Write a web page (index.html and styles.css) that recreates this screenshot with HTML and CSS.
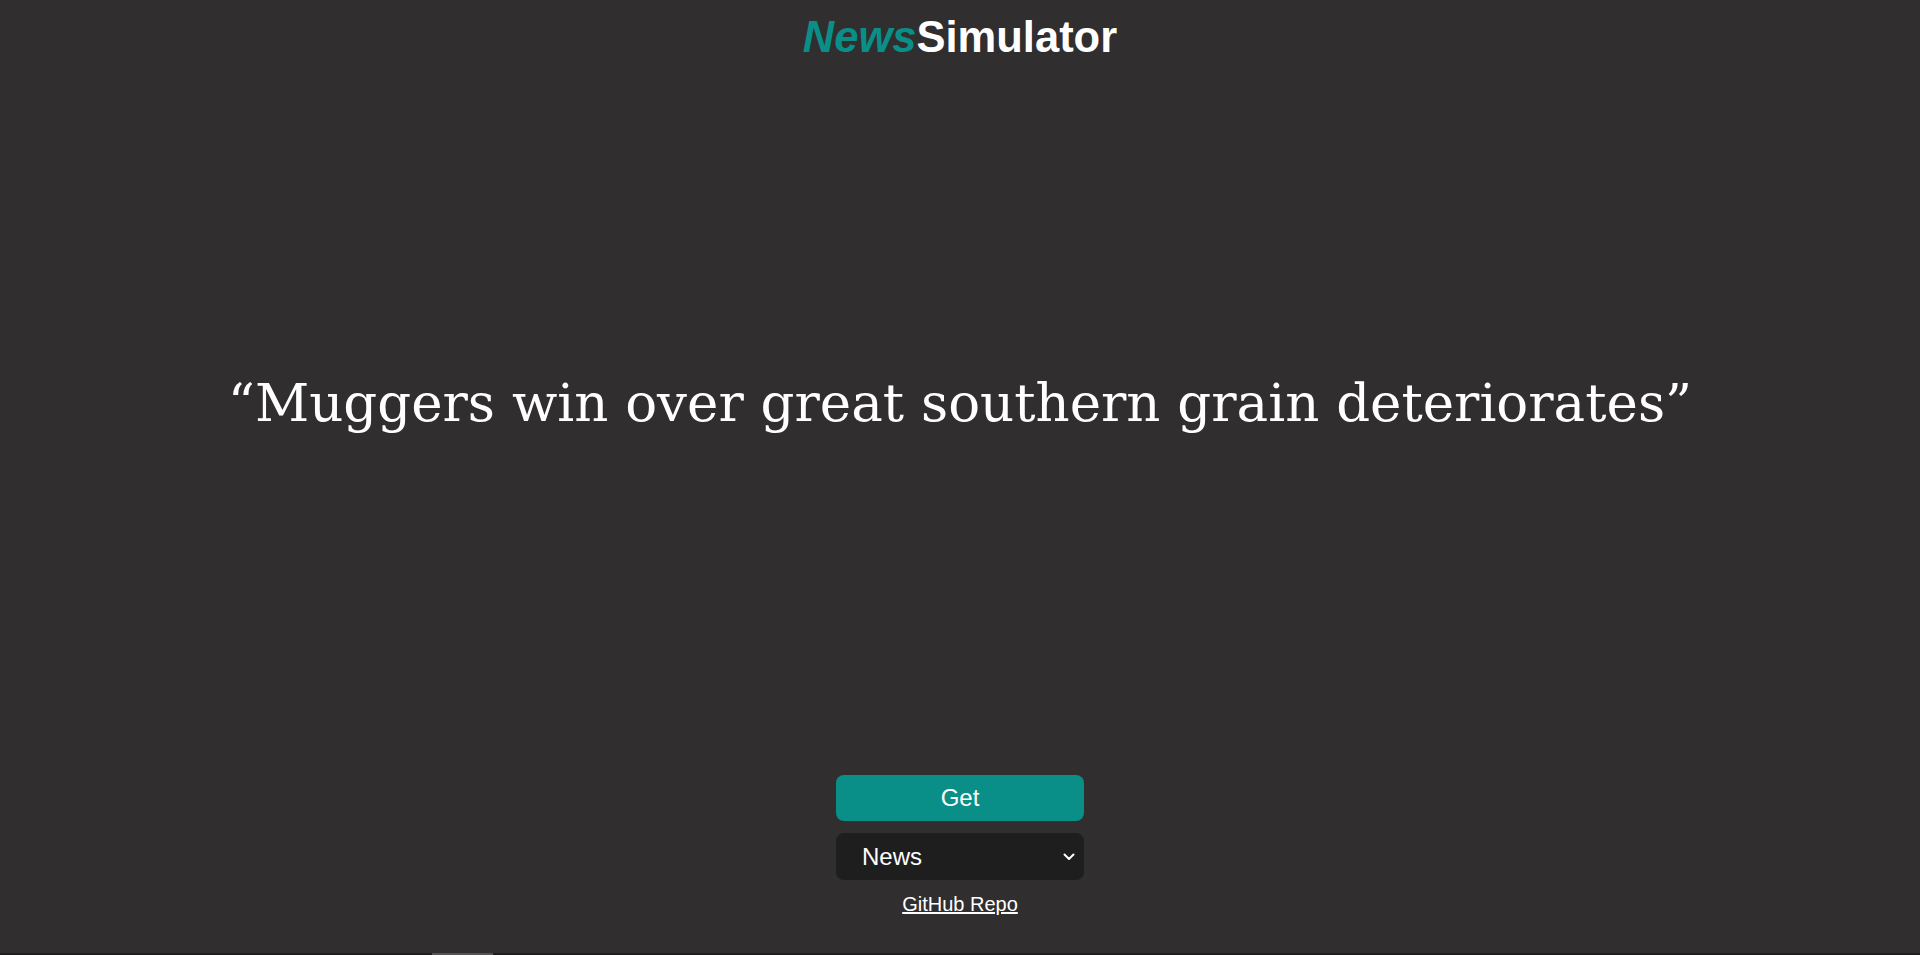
FILE: index.html
```html
<!DOCTYPE html>
<html lang="en">
<head>
<meta charset="utf-8">
<title>News Simulator</title>
<link rel="stylesheet" href="styles.css">
</head>
<body>
<div class="page">
  <header class="header">
    <h1 class="logo"><span class="logo-news">News</span><span class="logo-sim">Simulator</span></h1>
  </header>
  <main class="stage">
    <p class="headline">“Muggers win over great southern grain deteriorates”</p>
  </main>
  <section class="controls">
    <button class="get-btn" type="button">Get</button>
    <div class="select-wrap">
      <select class="kind-select">
        <option>News</option>
        <option>Sports</option>
      </select>
      <svg class="chevron" width="12" height="8" viewBox="0 0 12 8"><path d="M1.5 1.5 L6 6 L10.5 1.5" fill="none" stroke="#fff" stroke-width="2" stroke-linecap="round" stroke-linejoin="round"/></svg>
    </div>
    <a class="repo-link" href="#">GitHub Repo</a>
  </section>
  <div class="hscroll"><div class="hscroll-thumb"></div></div>
</div>
</body>
</html>
```
FILE: styles.css
```css
html, body {
  margin: 0;
  padding: 0;
  background: #302e2f;
}
.page {
  height: 955px;
  display: flex;
  flex-direction: column;
  color: #fff;
}
.header {
  display: flex;
  justify-content: center;
  padding-top: 13px;
}
.logo {
  margin: 0;
  font-family: "Liberation Sans", Arial, sans-serif;
  font-weight: 700;
  font-size: 43.5px;
  line-height: 48px;
}
.logo-news {
  color: #0a8f88;
  font-style: italic;
}
.logo-sim {
  color: #fff;
}
.stage {
  flex: 1;
  display: flex;
  align-items: center;
  justify-content: center;
  padding-bottom: 30px;
}
.headline {
  margin: 0;
  font-family: "DejaVu Serif", Georgia, serif;
  font-size: 53px;
  line-height: 1.2;
  color: #fff;
  text-align: center;
}
.controls {
  display: flex;
  flex-direction: column;
  align-items: center;
  padding-bottom: 37px;
}
.get-btn {
  width: 248px;
  height: 46px;
  border: none;
  border-radius: 8px;
  background: #0a8f88;
  color: #fff;
  font-family: "Liberation Sans", Arial, sans-serif;
  font-size: 24px;
  cursor: pointer;
}
.select-wrap {
  position: relative;
  margin-top: 12px;
  width: 248px;
  height: 47px;
}
.kind-select {
  appearance: none;
  -webkit-appearance: none;
  width: 100%;
  height: 100%;
  border: none;
  border-radius: 8px;
  background: #1f1e1f;
  color: #fff;
  font-family: "Liberation Sans", Arial, sans-serif;
  font-size: 24px;
  padding: 0 0 0 26px;
  outline: none;
}
.chevron {
  position: absolute;
  right: 9px;
  top: 20px;
  pointer-events: none;
}
.repo-link {
  margin-top: 13px;
  color: #fff;
  font-family: "Liberation Sans", Arial, sans-serif;
  font-size: 20px;
  line-height: 23px;
  text-decoration: underline;
}
.hscroll {
  height: 2px;
  background: #1e1e1e;
  display: flex;
}
.hscroll-thumb {
  margin-left: 432px;
  width: 61px;
  background: #555;
}
```
